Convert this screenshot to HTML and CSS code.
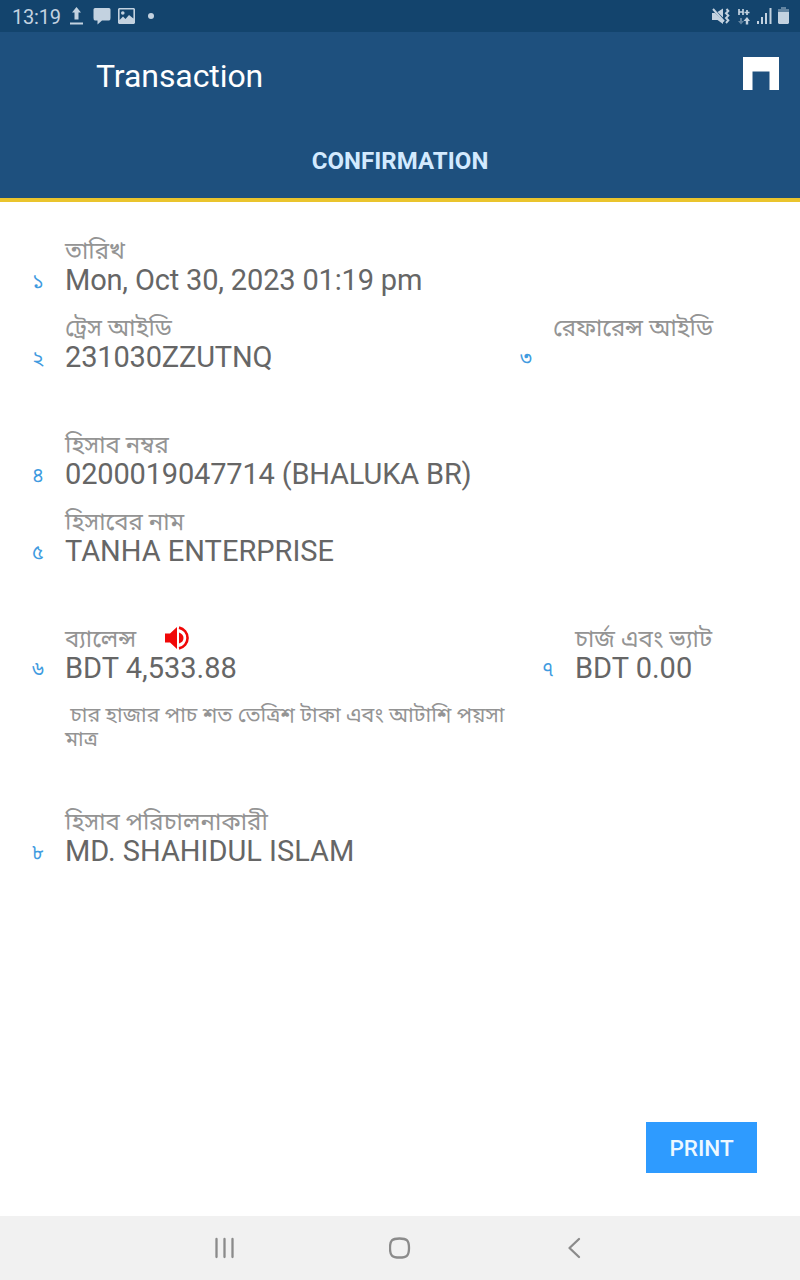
FILE: index.html
```html
<!DOCTYPE html>
<html lang="bn">
<head>
  <meta charset="UTF-8" />
  <meta name="viewport" content="width=device-width, initial-scale=1.0"/>
  <title>Transaction</title>
  <link rel="stylesheet" href="styles.css">
</head>
<body>

  <div class="status-bar">
    <span class="clock">13:19</span>
    <svg class="upload" width="13" height="18" viewBox="0 0 13 18"><path d="M6.5 0L11 5.5H8.5V12.5H4.5V5.5H2ZM0 15.5H13V17.5H0Z"/></svg>
    <svg class="chat" width="18" height="18" viewBox="0 0 18 18"><path d="M2 1H16Q17.5 1 17.5 2.5V11Q17.5 13.5 16 13.5H9L4.5 17.5V13.5H2Q.5 13.5 .5 11V2.5Q.5 1 2 1Z"/></svg>
    <svg class="photo" width="17" height="16" viewBox="0 0 17 16"><path fill-rule="evenodd" d="M1 0H16L17 1V15L16 16H1L0 15V1ZM1.6 1.6V12L5 8.5L7.5 11L11 7L15.4 10.5V1.6ZM4.8 3.2A1.8 1.8 0 1 1 4.8 6.8A1.8 1.8 0 1 1 4.8 3.2Z"/></svg>
    <span class="dot"></span>
    <div class="status-right">
      <svg class="mute" width="18" height="17" viewBox="0 0 18 17"><path d="M0 5H3L11 13V16L5.5 12H0ZM5.5 4L11 .5V9.5Z"/><path class="line" d="M1 1L12 13.5M14.5 1L16.3 3L14 5.3L16.3 7.6L14 10L16.3 12.4L14 15" stroke-width="2"/></svg>
      <svg class="data" width="12" height="17" viewBox="0 0 12 17"><path class="line" d="M1 1V7M5 1V7M1 4H5M6.5 4.5H11.5M9 2V7" stroke-width="1.7"/><path d="M2 10V13H0L3 16.5L6 13H4V10Z" opacity=".45"/><path d="M7.8 16.5V13H5.5L9 9L12 13H10.2V16.5Z"/></svg>
      <svg class="signal" width="15" height="16" viewBox="0 0 15 16"><path d="M0 13H2V16H0ZM4 9H6V16H4ZM8 5H10V16H8ZM12.5 0H14.5V16H12.5Z"/></svg>
      <svg class="battery" width="11" height="17" viewBox="0 0 11 17"><path d="M3 0H8V2H11V5H0V2H3Z" opacity=".45"/><path d="M0 5H11V16L10 17H1L0 16Z"/></svg>
    </div>
  </div>

  <header>
    <div class="toolbar">
      <h1>Transaction</h1>
      <svg class="home" width="36" height="33" viewBox="0 0 36 33"><path d="M0 0H36V33H26.5V14.5H9.5V33H0Z"/></svg>
    </div>
    <div class="tab">CONFIRMATION</div>
  </header>

  <main>
    <div class="row">
      <div class="field">
        <span class="num">১</span>
        <div class="label">তারিখ</div>
        <div class="value digits">Mon, Oct 30, 2023 01:19 pm</div>
      </div>
    </div>
    <div class="row">
      <div class="field trace">
        <span class="num">২</span>
        <div class="label">ট্রেস আইডি</div>
        <div class="value digits">231030ZZUTNQ</div>
      </div>
      <div class="field">
        <span class="num">৩</span>
        <div class="label">রেফারেন্স আইডি</div>
        <div class="value"></div>
      </div>
    </div>

    <div class="row group">
      <div class="field">
        <span class="num">৪</span>
        <div class="label">হিসাব নম্বর</div>
        <div class="value digits">0200019047714 (BHALUKA BR)</div>
      </div>
    </div>
    <div class="row">
      <div class="field">
        <span class="num">৫</span>
        <div class="label">হিসাবের নাম</div>
        <div class="value">TANHA ENTERPRISE</div>
      </div>
    </div>

    <div class="row group">
      <div class="field balance">
        <span class="num">৬</span>
        <div class="label">
          <span class="balance-text">ব্যালেন্স</span>
          <svg class="speaker" width="26" height="24" viewBox="0 0 26 24"><path d="M0 7.5H5L12 1V23L5 16.5H0ZM14 6.5Q18.5 8 18.5 12Q18.5 16 14 17.5Z"/><path class="wave" d="M14 1.6A10.6 10.6 0 0 1 14 22.4"/></svg>
        </div>
        <div class="value">BDT 4,533.88</div>
      </div>
      <div class="field">
        <span class="num">৭</span>
        <div class="label">চার্জ এবং ভ্যাট</div>
        <div class="value">BDT 0.00</div>
      </div>
    </div>
    <p class="words">&nbsp;চার হাজার পাচ শত তেত্রিশ টাকা এবং আটাশি পয়সা<br>মাত্র</p>

    <div class="row group">
      <div class="field">
        <span class="num">৮</span>
        <div class="label">হিসাব পরিচালনাকারী</div>
        <div class="value">MD. SHAHIDUL ISLAM</div>
      </div>
    </div>

    <button class="print">PRINT</button>
  </main>

  <nav>
    <svg width="20" height="22" viewBox="0 0 20 22"><path d="M1.5 2V20M9.5 2V20M17.5 2V20"/></svg>
    <svg width="22" height="22" viewBox="0 0 22 22"><path d="M10.5 1.5C18 1.5 20 3.5 20 11S18 20.5 10.5 20.5S1 18.5 1 11S3 1.5 10.5 1.5Z"/></svg>
    <svg width="20" height="22" viewBox="0 0 20 22"><path d="M14 2L4.5 11L14 20"/></svg>
  </nav>

</body>
</html>
```

FILE: styles.css
```css
* {
  box-sizing: border-box;
  margin: 0;
  padding: 0;
}

body {
  font-family: Roboto, "Noto Sans Bengali", "Noto Sans", sans-serif;
  background: #fff;
  color: #666;
  display: flex;
  flex-direction: column;
  height: 1280px;
}

.status-bar {
  display: flex;
  align-items: center;
  height: 32px;
  padding: 0 11px 0 12px;
  background: #13446d;
  color: #c3d2e0;
  fill: #c3d2e0;
}

.clock {
  font-size: 20px;
  letter-spacing: -0.2px;
  width: 58px;
  padding-top: 2px;
}

.chat {
  margin-left: 10px;
}

.photo {
  margin-left: 7px;
}

.dot {
  width: 6px;
  height: 6px;
  margin-left: 13px;
  border-radius: 50%;
  background: #c3d2e0;
}

.status-right {
  display: flex;
  align-items: center;
  margin-left: auto;
}

.line {
  fill: none;
  stroke: #c3d2e0;
}

.data {
  margin-left: 8px;
}

.signal {
  margin-left: 7px;
}

.battery {
  margin-left: 6px;
  margin-top: -2px;
}

header {
  height: 170px;
  background: #1e507e;
  border-bottom: 4px solid #eac42d;
}

.toolbar {
  display: flex;
  justify-content: space-between;
  height: 88px;
  padding: 25px 21px 0 96px;
}

h1 {
  color: #fff;
  font-size: 32px;
  font-weight: 400;
  letter-spacing: -0.08px;
  line-height: 38px;
}

.home {
  fill: #fff;
}

.tab {
  color: #d3eaff;
  font-size: 24px;
  font-weight: 700;
  letter-spacing: 0.06px;
  line-height: 82px;
  text-align: center;
}

main {
  flex: 1;
  display: flex;
  flex-direction: column;
  padding: 35px 43px 43px 32px;
}

.row {
  display: flex;
  margin-bottom: 19px;
}

.row.group {
  margin-top: 40px;
}

.field {
  display: grid;
  grid-template-columns: 33px auto;
  grid-template-rows: 28px 30px;
}

.trace {
  width: 488px;
}

.balance {
  width: 510px;
}

.num {
  grid-row: 2;
  color: #3f9be0;
  font-size: 20px;
  line-height: 32px;
}

.label {
  grid-column: 2;
  grid-row: 1;
  display: flex;
  align-items: center;
  color: #949494;
  font-size: 24px;
  line-height: 30px;
  white-space: nowrap;
}

.balance-text {
  width: 100px;
}

.speaker {
  margin-top: -2px;
  fill: #f00808;
}

.wave {
  fill: none;
  stroke: #f00808;
  stroke-width: 2.6;
}

.value {
  grid-column: 2;
  grid-row: 2;
  font-size: 29px;
  line-height: 30px;
  white-space: nowrap;
}

.digits {
  letter-spacing: -0.17px;
}

.words {
  margin: 1px 0 -2px 33px;
  color: #949494;
  font-size: 21.4px;
  line-height: 24px;
  white-space: nowrap;
}

.words + .row.group {
  margin-top: 59px;
}

.print {
  width: 111px;
  height: 51px;
  margin-top: auto;
  align-self: flex-end;
  border: none;
  background: #2e9bff;
  color: #edf8ff;
  font-family: inherit;
  font-size: 22.5px;
  font-weight: 500;
}

nav {
  display: flex;
  justify-content: center;
  align-items: center;
  gap: 154px;
  height: 64px;
  padding-bottom: 1px;
  background: #f1f1f1;
}

nav path {
  fill: none;
  stroke: #8b8b8b;
  stroke-width: 2.3;
  stroke-linecap: round;
  stroke-linejoin: round;
}
```
